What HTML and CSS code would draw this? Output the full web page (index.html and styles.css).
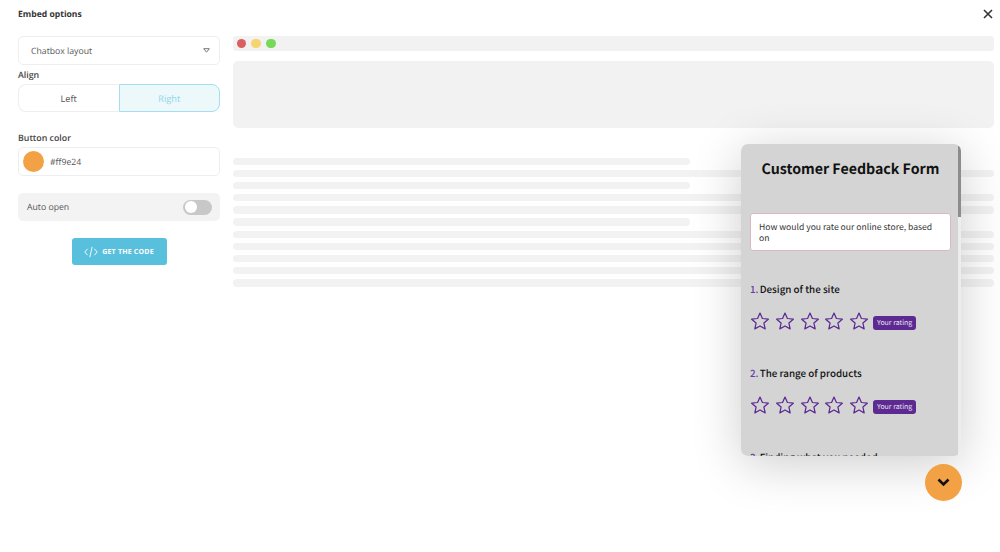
FILE: index.html
```html
<!DOCTYPE html>
<html lang="en">

<head>
    <meta charset="UTF-8">
    <meta name="viewport" content="width=device-width, initial-scale=1.0">
    <title>Embed options</title>
    <link rel="stylesheet" href="styles.css">
</head>

<body>
    <header class="top">
        <h1>Embed options</h1>
        <svg class="close" width="10" height="10" viewBox="0 0 10 10"><path d="M1 1 L9 9 M9 1 L1 9" stroke="#333" stroke-width="1.6" fill="none" /></svg>
    </header>

    <main class="content">
        <aside class="options">
            <div class="select">
                <span>Chatbox layout</span>
                <svg width="7" height="5" viewBox="0 0 7 5"><path d="M0.7 0.7 H6.3 L3.5 4.2 Z" stroke="#777" stroke-width="1" fill="none" /></svg>
            </div>

            <h2 class="label">Align</h2>
            <div class="align">
                <div class="align-btn">Left</div>
                <div class="align-btn active">Right</div>
            </div>

            <h2 class="label color-label">Button color</h2>
            <div class="color-input">
                <span class="swatch"></span>
                <span>#ff9e24</span>
            </div>

            <div class="auto-open">
                <span>Auto open</span>
                <span class="switch"><span class="knob"></span></span>
            </div>

            <button class="get-code">
                <svg width="14" height="12" viewBox="0 0 14 12"><path d="M3.6 2.8 L0.8 6 L3.6 9.2 M10.4 2.8 L13.2 6 L10.4 9.2 M8.2 0.8 L5.8 11.2" stroke="#fff" stroke-width="0.9" fill="none" /></svg>
                GET THE CODE
            </button>
        </aside>

        <section class="preview">
            <div class="browser-bar">
                <span class="dot red"></span>
                <span class="dot yellow"></span>
                <span class="dot green"></span>
            </div>
            <div class="hero"></div>
            <div class="lines">
                <div class="line short"></div>
                <div class="line"></div>
                <div class="line short"></div>
                <div class="line"></div>
                <div class="line"></div>
                <div class="line short"></div>
                <div class="line"></div>
                <div class="line"></div>
                <div class="line"></div>
                <div class="line"></div>
                <div class="line"></div>
            </div>
        </section>
    </main>

    <div class="widget">
        <div class="form">
            <h3>Customer Feedback Form</h3>
            <div class="intro">How would you rate our online store, based on</div>

            <div class="question"><b>1.</b> Design of the site</div>
            <div class="rating">
                <svg class="star" viewBox="0 0 24 24"><path d="M12 2.5 L14.9 9 L22 9.8 L16.7 14.5 L18.2 21.5 L12 18 L5.8 21.5 L7.3 14.5 L2 9.8 L9.1 9 Z" /></svg>
                <svg class="star" viewBox="0 0 24 24"><path d="M12 2.5 L14.9 9 L22 9.8 L16.7 14.5 L18.2 21.5 L12 18 L5.8 21.5 L7.3 14.5 L2 9.8 L9.1 9 Z" /></svg>
                <svg class="star" viewBox="0 0 24 24"><path d="M12 2.5 L14.9 9 L22 9.8 L16.7 14.5 L18.2 21.5 L12 18 L5.8 21.5 L7.3 14.5 L2 9.8 L9.1 9 Z" /></svg>
                <svg class="star" viewBox="0 0 24 24"><path d="M12 2.5 L14.9 9 L22 9.8 L16.7 14.5 L18.2 21.5 L12 18 L5.8 21.5 L7.3 14.5 L2 9.8 L9.1 9 Z" /></svg>
                <svg class="star" viewBox="0 0 24 24"><path d="M12 2.5 L14.9 9 L22 9.8 L16.7 14.5 L18.2 21.5 L12 18 L5.8 21.5 L7.3 14.5 L2 9.8 L9.1 9 Z" /></svg>
                <span class="badge">Your rating</span>
            </div>

            <div class="question"><b>2.</b> The range of products</div>
            <div class="rating">
                <svg class="star" viewBox="0 0 24 24"><path d="M12 2.5 L14.9 9 L22 9.8 L16.7 14.5 L18.2 21.5 L12 18 L5.8 21.5 L7.3 14.5 L2 9.8 L9.1 9 Z" /></svg>
                <svg class="star" viewBox="0 0 24 24"><path d="M12 2.5 L14.9 9 L22 9.8 L16.7 14.5 L18.2 21.5 L12 18 L5.8 21.5 L7.3 14.5 L2 9.8 L9.1 9 Z" /></svg>
                <svg class="star" viewBox="0 0 24 24"><path d="M12 2.5 L14.9 9 L22 9.8 L16.7 14.5 L18.2 21.5 L12 18 L5.8 21.5 L7.3 14.5 L2 9.8 L9.1 9 Z" /></svg>
                <svg class="star" viewBox="0 0 24 24"><path d="M12 2.5 L14.9 9 L22 9.8 L16.7 14.5 L18.2 21.5 L12 18 L5.8 21.5 L7.3 14.5 L2 9.8 L9.1 9 Z" /></svg>
                <svg class="star" viewBox="0 0 24 24"><path d="M12 2.5 L14.9 9 L22 9.8 L16.7 14.5 L18.2 21.5 L12 18 L5.8 21.5 L7.3 14.5 L2 9.8 L9.1 9 Z" /></svg>
                <span class="badge">Your rating</span>
            </div>

            <div class="question"><b>3.</b> Finding what you needed</div>
        </div>
        <div class="scrollbar"><div class="thumb"></div></div>
    </div>

    <div class="launcher">
        <svg width="13" height="9" viewBox="0 0 13 9"><path d="M1.5 1.5 L6.5 6.5 L11.5 1.5" stroke="#111" stroke-width="2.6" fill="none" /></svg>
    </div>
</body>

</html>
```

FILE: styles.css
```css
body {
    font-family: "Open Sans", sans-serif;
    text-rendering: geometricPrecision;
    margin: 0;
    width: 1000px;
    height: 552px;
    overflow: hidden;
    background-color: white;
    color: #555;
    font-size: 8.7px;
}

.top {
    display: flex;
    justify-content: space-between;
    align-items: center;
    height: 28px;
    padding: 0 7px 0 18px;
}

.top h1 {
    margin: 0;
    font-size: 8.6px;
    font-weight: 700;
    color: #333;
}

.content {
    display: flex;
    gap: 13px;
    padding: 8px 6px 0 18px;
}

.options {
    width: 202px;
    flex-shrink: 0;
}

.select {
    display: flex;
    justify-content: space-between;
    align-items: center;
    box-sizing: border-box;
    height: 29px;
    padding: 0 9px 0 12px;
    border: 1px solid #eee;
    border-radius: 5px;
}

.label {
    margin: 0;
    font-size: 8.8px;
    font-weight: 600;
    color: #444;
    line-height: 14px;
}

.select + .label {
    margin-top: 3px;
}

.align {
    display: flex;
    margin-top: 2px;
    height: 28px;
}

.align-btn {
    flex: 1;
    box-sizing: border-box;
    display: flex;
    align-items: center;
    justify-content: center;
    border: 1px solid #eee;
    border-right: none;
    border-radius: 8px 0 0 8px;
    font-size: 9.2px;
}

.align-btn.active {
    color: #8fd6ea;
    background-color: #edf8fb;
    border: 1px solid #a3dff0;
    border-radius: 0 8px 8px 0;
}

.color-label {
    margin-top: 19px;
}

.color-input {
    display: flex;
    align-items: center;
    gap: 6px;
    box-sizing: border-box;
    height: 29px;
    margin-top: 2px;
    padding-left: 4px;
    border: 1px solid #eee;
    border-radius: 5px;
}

.swatch {
    width: 21px;
    height: 21px;
    border-radius: 50%;
    background-color: #f2a244;
}

.auto-open {
    display: flex;
    justify-content: space-between;
    align-items: center;
    box-sizing: border-box;
    height: 28px;
    margin-top: 17px;
    padding: 0 8px 0 9px;
    background-color: #f3f3f3;
    border-radius: 5px;
}

.switch {
    display: block;
    width: 29px;
    height: 15px;
    border-radius: 8px;
    background-color: #c8c8c8;
}

.knob {
    display: block;
    width: 12px;
    height: 12px;
    margin: 1.5px;
    border-radius: 50%;
    background-color: white;
}

.get-code {
    display: flex;
    align-items: center;
    justify-content: center;
    gap: 4px;
    width: 95px;
    height: 27px;
    margin: 17px auto 0;
    padding: 0;
    border: none;
    border-radius: 3px;
    background-color: #58c0dd;
    color: white;
    font-family: "Open Sans", sans-serif;
    font-size: 7px;
    font-weight: 700;
    letter-spacing: 0.2px;
}

.preview {
    flex: 1;
}

.browser-bar {
    display: flex;
    align-items: center;
    gap: 5.6px;
    height: 15px;
    padding-left: 3.5px;
    background-color: #f2f2f2;
    border-radius: 3px;
}

.dot {
    width: 9.4px;
    height: 9.4px;
    border-radius: 50%;
}

.red {
    background-color: #d9605c;
}

.yellow {
    background-color: #f7d56e;
}

.green {
    background-color: #77d958;
}

.hero {
    height: 67px;
    margin-top: 10px;
    background-color: #f2f2f2;
    border-radius: 5px;
}

.lines {
    display: flex;
    flex-direction: column;
    gap: 4.9px;
    margin-top: 29.5px;
}

.line {
    height: 7.3px;
    background-color: #f2f2f2;
    border-radius: 4px;
}

.line.short {
    width: 457px;
}

.widget {
    position: absolute;
    left: 741px;
    top: 144px;
    display: flex;
    width: 220px;
    height: 312px;
    border-radius: 7px;
    box-shadow: 0 8px 50px rgba(0, 0, 0, 0.2);
    overflow: hidden;
}

.form {
    width: 217px;
    box-sizing: border-box;
    height: 312px;
    padding: 0 7px 0 9px;
    overflow: hidden;
    background-color: #d4d4d4;
    font-family: "Noto Sans CJK SC", "Noto Sans", sans-serif;
    color: #111;
}

.form h3 {
    margin: 0;
    padding-top: 14px;
    font-size: 14.2px;
    line-height: 23px;
    font-weight: 700;
    text-align: center;
}

.intro {
    box-sizing: border-box;
    height: 38px;
    margin-top: 32px;
    padding: 8px 8px;
    background-color: white;
    border: 1px solid #d9b8c4;
    border-radius: 3px;
    font-size: 8.6px;
    line-height: 10.5px;
    color: #333;
}

.question {
    margin-top: 30px;
    font-size: 9.8px;
    line-height: 16px;
    font-weight: 500;
}

.question b {
    margin-right: -1px;
    color: #6a3ca6;
    font-weight: 500;
}

.rating {
    display: flex;
    align-items: center;
    gap: 4.8px;
    margin-top: 13px;
    height: 22px;
}

.rating + .question {
    margin-top: 33px;
}

.star {
    width: 20px;
    height: 20px;
    fill: none;
    stroke: #5d2a92;
    stroke-width: 1.5;
    stroke-linejoin: round;
}

.badge {
    margin-top: 3px;
    margin-left: -1px;
    padding: 0 4px;
    height: 14px;
    line-height: 14px;
    border-radius: 3px;
    background-color: #5d2a92;
    color: #e8e0f0;
    font-size: 7px;
}

.scrollbar {
    width: 3px;
    margin-top: 2px;
    background-color: #ededed;
}

.thumb {
    height: 71px;
    background-color: #8c8c8c;
}

.launcher {
    position: absolute;
    left: 924.5px;
    top: 464px;
    display: flex;
    align-items: center;
    justify-content: center;
    width: 37px;
    height: 37px;
    border-radius: 50%;
    background-color: #f2a244;
}
```
